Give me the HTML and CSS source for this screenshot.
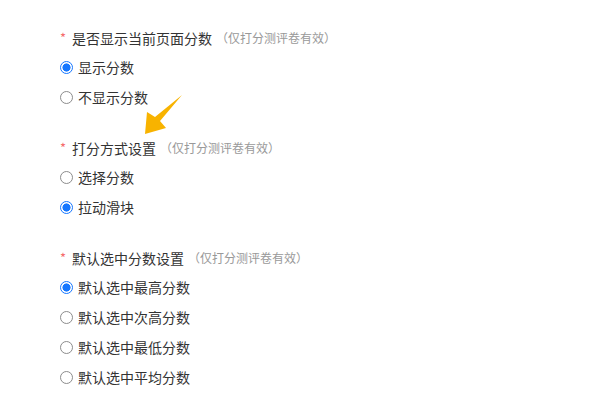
FILE: index.html
```html
<!DOCTYPE html>
<html lang="zh-CN">
<head>
    <meta charset="UTF-8">
    <title>评分设置</title>
    <link rel="stylesheet" href="styles.css">
</head>
<body>
    <div class="settings">
        <div class="group">
            <div class="group-title"><span class="required">*</span>是否显示当前页面分数<span class="hint">（仅打分测评卷有效）</span></div>
            <label class="radio"><input type="radio" name="showScore" checked><span>显示分数</span></label>
            <label class="radio"><input type="radio" name="showScore"><span>不显示分数</span></label>
        </div>

        <div class="group">
            <div class="group-title"><span class="required">*</span>打分方式设置<span class="hint">（仅打分测评卷有效）</span></div>
            <label class="radio"><input type="radio" name="scoreMode"><span>选择分数</span></label>
            <label class="radio"><input type="radio" name="scoreMode" checked><span>拉动滑块</span></label>
        </div>

        <div class="group">
            <div class="group-title"><span class="required">*</span>默认选中分数设置<span class="hint">（仅打分测评卷有效）</span></div>
            <label class="radio"><input type="radio" name="defaultScore" checked><span>默认选中最高分数</span></label>
            <label class="radio"><input type="radio" name="defaultScore"><span>默认选中次高分数</span></label>
            <label class="radio"><input type="radio" name="defaultScore"><span>默认选中最低分数</span></label>
            <label class="radio"><input type="radio" name="defaultScore"><span>默认选中平均分数</span></label>
        </div>
    </div>

    <!-- pointer arrow -->
    <svg class="pointer" width="600" height="400" viewBox="0 0 600 400">
        <polygon points="182,95 160,121 166,128 145,134 147,112 155,117" fill="#f8b300"/>
    </svg>
</body>
</html>
```

FILE: styles.css
```css
body {
    margin: 0;
    font-family: "Noto Sans CJK SC", "Noto Sans", sans-serif;
    font-size: 14px;
    color: #333;
    background: #fff;
}
.settings {
    padding: 28px 0 0 60px;
}
.group {
    margin-bottom: 26px;
}
.group-title {
    height: 20px;
    line-height: 20px;
    margin-bottom: 4px;
    display: flex;
    align-items: center;
}
.required {
    color: #f56c6c;
    margin-right: 6px;
    font-size: 13px;
}
.hint {
    color: #999;
    font-size: 12px;
    margin-left: 4px;
}
.radio {
    display: flex;
    align-items: center;
    height: 30px;
    cursor: pointer;
}
.radio input {
    appearance: none;
    -webkit-appearance: none;
    margin: 0 5px 0 0;
    width: 13px;
    height: 13px;
    border: 1px solid #8c8c8c;
    border-radius: 50%;
    background: #fff;
    box-sizing: border-box;
}
.radio input:checked {
    border-color: #1677ff;
    background: radial-gradient(circle, #1677ff 0 3.8px, #fff 4.3px);
}
.pointer {
    position: absolute;
    left: 0;
    top: 0;
    pointer-events: none;
}
```
